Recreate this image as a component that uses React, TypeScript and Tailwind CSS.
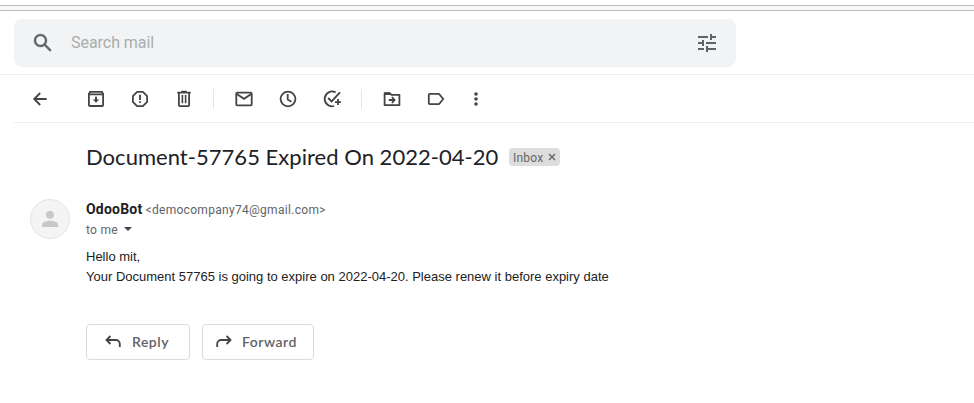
import type { ReactNode } from "react";

function Icon({ children, className = "" }: { children: ReactNode; className?: string }) {
  return (
    <svg
      viewBox="0 0 20 20"
      width="20"
      height="20"
      fill="none"
      stroke="currentColor"
      strokeWidth="1.8"
      className={`block shrink-0 ${className}`}
    >
      {children}
    </svg>
  );
}

function SearchBar() {
  return (
    <div className="ml-[14px] mt-2 flex h-12 w-[722px] items-center rounded-lg bg-[#f1f3f4] pl-[17px] pr-[17px] text-[#5f6368]">
      <svg viewBox="0 0 24 24" width="24" height="24" fill="currentColor" className="block shrink-0">
        <path d="M20.49 19l-5.73-5.73C15.53 12.2 16 10.91 16 9.5 16 5.91 13.09 3 9.5 3S3 5.91 3 9.5 5.91 16 9.5 16c1.41 0 2.7-.47 3.77-1.24L19 20.49 20.49 19zM5 9.5C5 7.01 7.01 5 9.5 5S14 7.01 14 9.5 11.99 14 9.5 14 5 11.99 5 9.5z" stroke="currentColor" strokeWidth=".3" />
      </svg>
      <span className="ml-4 flex-1 whitespace-nowrap font-['Roboto',sans-serif] text-base leading-6 tracking-[-0.04px] text-[#aaacae]">
        <span>Search mail</span>
      </span>
      <svg viewBox="0 0 24 24" width="24" height="24" fill="currentColor" className="block shrink-0">
        <path d="M3 17v2h6v-2H3zM3 5v2h10V5H3zm10 16v-2h8v-2h-8v-2h-2v6h2zM7 9v2H3v2h4v2h2V9H7zm14 4v-2H11v2h10zm-6-4h2V7h4V5h-4V3h-2v6z" />
      </svg>
    </div>
  );
}

function Toolbar() {
  return (
    <div className="ml-[14px] flex h-12 items-center border-b border-[#eceff1] pl-4 text-[#444]">
      <Icon className="mr-9">
        <path d="M16.7 10H4.5M10.2 4 4.2 10l6 6" />
      </Icon>
      <Icon className="mr-6">
        <path d="M2.9 5 4 2.9h12L17.1 5v11a1 1 0 0 1-1 1H3.9a1 1 0 0 1-1-1zM3 5.4h14" />
        <path d="M10 7.7v3.5" strokeWidth="2" />
        <path d="M6.7 10.4h6.6L10 13.8z" fill="currentColor" stroke="none" />
      </Icon>
      <Icon className="mr-6">
        <path d="M7.1 2.9h5.8l4.2 4.2v5.8l-4.2 4.2H7.1l-4.2-4.2V7.1z" strokeLinejoin="round" />
        <path d="M10 5.8v5.1M10 12.3v1.8" />
      </Icon>
      <Icon className="mr-[19px]">
        <path d="M3.2 3.6h13.6M7.3 2.7h5.4M4.9 3.6v12.5a1 1 0 0 0 1 1h8.2a1 1 0 0 0 1-1V3.6" />
        <path d="M8.4 6v8.2M11.6 6v8.2" strokeWidth="1.6" />
      </Icon>
      <span className="mr-5 h-5 w-px bg-[#e4e6e8]" />
      <Icon className="mr-6">
        <rect x="2.3" y="3.7" width="15.4" height="12.6" rx=".9" />
        <path d="m2.4 4.8 7.6 5 7.6-5" />
      </Icon>
      <Icon className="mr-6">
        <circle cx="10" cy="10" r="7.4" />
        <path d="M9.7 5.1v5.3l3.7 2.4" />
      </Icon>
      <Icon className="mr-[19px] overflow-visible">
        <path d="M13.6 3.4A7.4 7.4 0 1 0 12.1 17M6.1 9l3.5 3.4 8.4-9" />
        <path d="M16 10.1v6M13 13.1h6" />
      </Icon>
      <span className="mr-5 h-5 w-px bg-[#e4e6e8]" />
      <Icon className="mr-6">
        <path d="M2.6 4.2h5.2l1.7 1.7h7.9v10.2H2.6z" strokeLinejoin="round" />
        <path d="M2.3 3.5h5.5l2 2.5H2.3z" fill="currentColor" stroke="none" />
        <path d="M6.8 11h5.4M9.9 8.2l2.7 2.8-2.7 2.8" />
      </Icon>
      <Icon className="mr-5">
        <path d="M3.7 4.8h8.9c.4 0 .6.1.8.4l3.8 4.8-3.8 4.8c-.2.3-.4.4-.8.4H3.7a.9.9 0 0 1-.9-.9V5.7c0-.5.4-.9.9-.9z" />
      </Icon>
      <Icon>
        <g fill="currentColor" stroke="none">
          <circle cx="10" cy="5" r="1.8" />
          <circle cx="10" cy="10" r="1.8" />
          <circle cx="10" cy="15" r="1.8" />
        </g>
      </Icon>
    </div>
  );
}

function Message() {
  return (
    <main className="pl-[86px] pt-5">
      <div className="flex h-7 items-center">
        <h1 className="w-[423px] whitespace-nowrap font-['Lato',sans-serif] text-[22px] leading-7 tracking-[0.03px] text-[#202124]">
          <span>Document-57765 Expired On 2022-04-20</span>
        </h1>
        <span className="flex h-[18px] w-[51px] items-center justify-between rounded bg-[#ddd] px-1 font-['Roboto',sans-serif] text-xs tracking-[0.2px] text-[#666]">
          <span className="pt-px">Inbox</span>
          <svg viewBox="0 0 8 8" width="8" height="8" stroke="currentColor" strokeWidth="1.4">
            <path d="m1 1 6 6M7 1 1 7" />
          </svg>
        </span>
      </div>

      <div className="-ml-14 mt-7 flex">
        <div className="mr-4 flex size-10 shrink-0 items-center justify-center rounded-full border border-[#e4e4e4] bg-[#f4f4f4]">
          <svg viewBox="0 0 16 16" width="16" height="16" fill="#c8c8c8">
            <circle cx="8" cy="3.8" r="4" />
            <path d="M0 16v-2.3C0 11 4.5 9.7 8 9.7s8 1.3 8 4V16z" />
          </svg>
        </div>
        <div className="font-['Roboto',sans-serif] text-xs text-[#5f6368]">
          <div className="flex h-5 items-center whitespace-nowrap">
            <span className="w-[59.5px] text-sm font-bold tracking-[0.2px] text-[#202124]">OdooBot</span>
            <span className="mt-px tracking-[0.3px]">&lt;democompany74@gmail.com&gt;</span>
          </div>
          <div className="flex h-5 items-center tracking-[0.3px]">
            <span className="pt-[2px]">to me</span>
            <span className="ml-[6px] border-x-4 border-t-4 border-x-transparent border-t-[#444]" />
          </div>
        </div>
      </div>

      <div className="mt-2 font-['Liberation_Sans',Arial,sans-serif] text-[13px] leading-5 text-[#222]">
        <p>Hello mit,</p>
        <p>Your Document 57765 is going to expire on 2022-04-20. Please renew it before expiry date</p>
      </div>

      <div className="mt-[37px] flex gap-3 font-['Lato',sans-serif] text-sm font-semibold tracking-[0.5px] text-[#5f6368]">
        <button className="flex h-9 w-[104px] items-center rounded border border-[#dadce0] pl-4">
          <Icon className="text-[#444]">
            <path d="M7.4 4 3.5 8l3.9 4M3.7 8h9.1a4 4 0 0 1 4 4v3" />
          </Icon>
          <span className="ml-[9px]">Reply</span>
        </button>
        <button className="flex h-9 w-28 items-center rounded border border-[#dadce0] pl-[11px]">
          <Icon className="text-[#444]">
            <path d="m12.6 4 3.9 4-3.9 4M16.3 8H7.2a4 4 0 0 0-4 4v3" />
          </Icon>
          <span className="ml-2">Forward</span>
        </button>
      </div>
    </main>
  );
}

export default function App() {
  return (
    <div className="h-[403px] w-[974px] overflow-hidden bg-white pt-[5px]">
      <div className="h-[6px] border-y border-[#bdbdbd] bg-[#f8f8f8]" />
      <SearchBar />
      <div className="mt-[7px] h-px bg-[#eceff1]" />
      <Toolbar />
      <Message />
    </div>
  );
}
